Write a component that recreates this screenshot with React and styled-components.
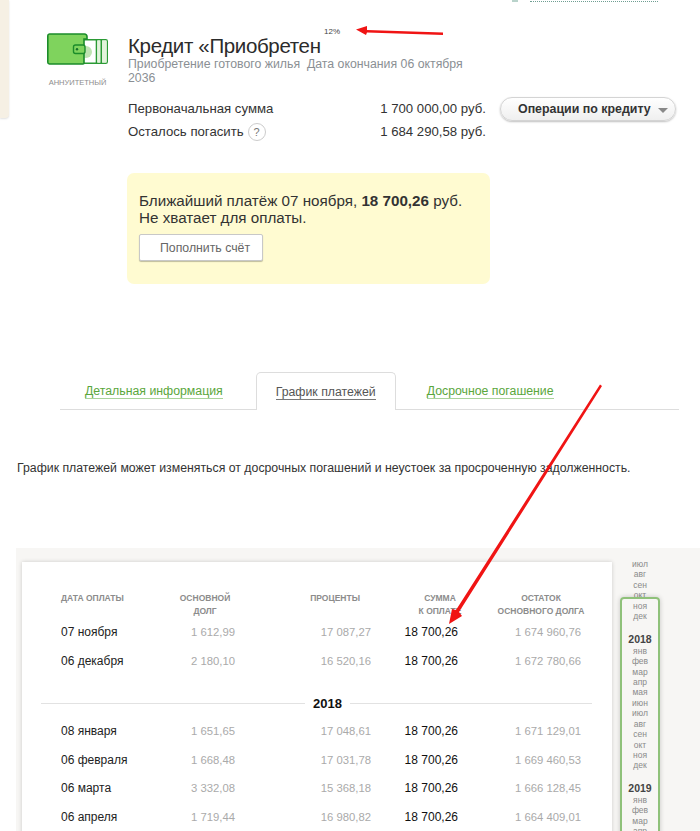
import React from "react";
import styled, { createGlobalStyle } from "styled-components";

const GlobalStyle = createGlobalStyle`
  html, body {
    margin: 0;
    padding: 0;
    background: #fff;
  }
  body {
    font-family: "Liberation Sans", Arial, sans-serif;
    color: #333;
  }
`;

const Page = styled.div`
  position: relative;
  width: 700px;
  height: 831px;
  overflow: hidden;
  background: #fff;
`;

// cropped leftovers of the page above the shot
const SideStub = styled.div`
  position: absolute;
  left: 0;
  top: 0;
  width: 9px;
  height: 118px;
  background: #f6f0e4;
  border-bottom-right-radius: 4px;
  box-shadow: 0 1px 2px rgba(0, 0, 0, 0.12);
`;
const TopLink = styled.div`
  position: absolute;
  left: 530px;
  top: 1px;
  width: 128px;
  border-top: 1px dotted #6f9e92;
`;
const TopIcon = styled.div`
  position: absolute;
  left: 512px;
  top: 0;
  width: 6px;
  height: 2px;
  background: #b9d3cb;
`;

const Arrows = styled.svg`
  position: absolute;
  left: 0;
  top: 0;
  z-index: 5;
  pointer-events: none;
`;

const Header = styled.section`
  display: flex;
  padding: 33px 0 0 47px;
  height: 140px;
  box-sizing: border-box;
`;
const ProductCol = styled.div`
  width: 61px;
  margin-right: 20px;
  display: flex;
  flex-direction: column;
  align-items: center;
`;
const ProductType = styled.div`
  margin-top: 13px;
  font-size: 7.5px;
  line-height: 10px;
  color: #8d8d8d;
  white-space: nowrap;
`;
const InfoCol = styled.div`
  position: relative;
  width: 548px;
`;
const Title = styled.h1`
  margin: 1px 0 -1px;
  font-size: 20.5px;
  font-weight: 400;
  line-height: 24px;
  letter-spacing: -0.35px;
  color: #2b2b2b;
  white-space: nowrap;
`;
const Percent = styled.span`
  position: absolute;
  left: 196px;
  top: -6px;
  font-size: 8px;
  line-height: 10px;
  color: #444;
`;
const Subtitle = styled.div`
  width: 345px;
  font-size: 12.3px;
  line-height: 14px;
  color: #8a8f94;
  white-space: pre-wrap;
`;
const SumBlock = styled.div`
  position: relative;
  margin-top: 12px;
`;
const SumRow = styled.div`
  display: flex;
  justify-content: space-between;
  width: 358px;
  height: 23px;
  font-size: 13.2px;
  line-height: 23px;
  color: #333;
`;
const SumLabel = styled.span`
  display: flex;
  align-items: center;
`;
const Hint = styled.span`
  width: 18px;
  height: 18px;
  margin-left: 4px;
  border: 1px solid #ccc;
  border-radius: 50%;
  box-sizing: border-box;
  font-size: 11px;
  line-height: 16px;
  text-align: center;
  color: #777;
`;
const OpsButton = styled.button`
  position: absolute;
  left: 372px;
  top: 0;
  display: flex;
  align-items: center;
  justify-content: space-between;
  width: 176px;
  height: 24px;
  padding: 0 7px 0 17px;
  border: 1px solid #d4d4d4;
  border-radius: 12px;
  background: linear-gradient(#fff, #efefef);
  box-shadow: 0 1px 2px rgba(0, 0, 0, 0.25);
  font-family: inherit;
  font-size: 12.4px;
  font-weight: 700;
  color: #333;
  white-space: nowrap;
`;
const Caret = styled.span`
  width: 0;
  height: 0;
  border-left: 5px solid transparent;
  border-right: 5px solid transparent;
  border-top: 5px solid #888;
  margin-top: 2px;
`;

const Notice = styled.section`
  width: 363px;
  height: 111px;
  margin: 33px 0 0 127px;
  padding: 19px 12px 0;
  box-sizing: border-box;
  border-radius: 7px;
  background: #fffbd1;
`;
const NoticeText = styled.div`
  font-size: 15.2px;
  line-height: 17px;
  color: #333;
  white-space: nowrap;
`;
const RefillButton = styled.button`
  display: block;
  width: 124px;
  height: 27px;
  margin-top: 8px;
  padding: 0 0 0 20px;
  border: 1px solid #c8c8c8;
  border-radius: 2px;
  background: #fff;
  box-shadow: 0 1px 1px rgba(0, 0, 0, 0.25);
  font-family: inherit;
  font-size: 12.3px;
  color: #666;
  text-align: left;
`;

const Tabs = styled.nav`
  display: flex;
  width: 619px;
  height: 38px;
  margin: 88px 0 0 60px;
  padding-left: 25px;
  box-sizing: border-box;
  border-bottom: 1px solid #ddd;
`;
const Tab = styled.div`
  box-sizing: border-box;
  height: 38px;
  margin-right: ${(p) => p.$gap || 0}px;
  font-size: 12.3px;
  line-height: 16px;
  ${(p) =>
    p.$active
      ? `
    padding: 11px 19px 0;
    background: #fff;
    border: 1px solid #ddd;
    border-bottom: 0;
    border-radius: 5px 5px 0 0;
    color: #555;
  `
      : `
    padding: 11px 0 0;
    color: #5aa63c;
  `}
`;
const TabLabel = styled.span`
  border-bottom: 1px solid ${(p) => (p.$active ? "#777" : "#a9d39a")};
`;

const Lead = styled.p`
  margin: 50px 0 0 17px;
  font-size: 12.3px;
  line-height: 16px;
  color: #333;
  white-space: nowrap;
`;

const Schedule = styled.section`
  display: flex;
  align-items: flex-start;
  height: 284px;
  margin: 72px 0 0 16px;
  padding: 14px 0 0 6px;
  box-sizing: border-box;
  background: #f7f6f4;
`;
const Card = styled.div`
  width: 590px;
  height: 300px;
  padding: 30px 0 0 39px;
  box-sizing: border-box;
  background: #fff;
  box-shadow: 0 0 4px rgba(0, 0, 0, 0.18);
`;
const columns = "100px 74px 136px 87px 123px";
const Grid = styled.div`
  display: grid;
  grid-template-columns: ${columns};
  grid-auto-rows: 28.5px;
  align-items: center;
`;
const HeadRow = styled.div`
  display: grid;
  grid-template-columns: ${columns};
  height: 26px;
  font-size: 8.5px;
  font-weight: 700;
  line-height: 13px;
  color: #8c8c8c;
`;
const HeadCell = styled.div`
  justify-self: ${(p) => (p.$first ? "start" : "end")};
  width: ${(p) => (p.$w ? `${p.$w}px` : "auto")};
  margin-right: ${(p) => p.$mr || 0}px;
  text-align: center;
  white-space: nowrap;
`;
const DateCell = styled.div`
  color: #222;
  font-size: 12px;
`;
const AmountCell = styled.div`
  text-align: right;
  font-size: ${(p) => (p.$strong ? 12 : 11.3)}px;
  color: ${(p) => (p.$strong ? "#111" : "#aaa")};
`;
const YearDivider = styled.div`
  display: flex;
  align-items: center;
  width: 551px;
  height: 28px;
  margin: 14px 0 0 -20px;
  font-size: 13px;
  font-weight: 700;
  color: #111;

  &::before,
  &::after {
    content: "";
    height: 1px;
    background: #e2e2e2;
  }
  &::before {
    flex: 0 0 264px;
  }
  &::after {
    flex: 1;
  }
  span {
    padding: 0 8px;
  }
`;

const Rail = styled.div`
  position: relative;
  width: 40px;
  margin: -3px 0 0 8px;
  text-align: center;
`;
const RailFrame = styled.div`
  position: absolute;
  left: 0;
  top: 38px;
  width: 40px;
  height: 260px;
  box-sizing: border-box;
  border: 2px solid #8fc17a;
  border-radius: 4px;
  box-shadow: 0 0 5px rgba(0, 0, 0, 0.2);
`;
const Month = styled.div`
  height: 10.45px;
  font-size: 8.5px;
  line-height: 10.45px;
  color: #8a8a8a;
`;
const Year = styled.div`
  margin: 11px 0 0;
  font-size: 10.5px;
  font-weight: 700;
  line-height: 13px;
  color: #444;
`;

const firstRows = [
  ["07 ноября", "1 612,99", "17 087,27", "1 674 960,76"],
  ["06 декабря", "2 180,10", "16 520,16", "1 672 780,66"],
];
const secondRows = [
  ["08 января", "1 651,65", "17 048,61", "1 671 129,01"],
  ["06 февраля", "1 668,48", "17 031,78", "1 669 460,53"],
  ["06 марта", "3 332,08", "15 368,18", "1 666 128,45"],
  ["06 апреля", "1 719,44", "16 980,82", "1 664 409,01"],
];
const months = ["янв", "фев", "мар", "апр", "мая", "июн", "июл", "авг", "сен", "окт", "ноя", "дек"];

function Rows({ rows }) {
  return (
    <Grid>
      {rows.map((r) => (
        <React.Fragment key={r[0]}>
          <DateCell>{r[0]}</DateCell>
          <AmountCell>{r[1]}</AmountCell>
          <AmountCell>{r[2]}</AmountCell>
          <AmountCell $strong>18 700,26</AmountCell>
          <AmountCell>{r[3]}</AmountCell>
        </React.Fragment>
      ))}
    </Grid>
  );
}

function WalletIcon() {
  return (
    <svg width="61" height="32" viewBox="0 0 61 32">
      <rect x="36" y="6.7" width="24.3" height="23.6" rx="1.5" fill="#fff" stroke="#2b9a35" strokeWidth="1.4" />
      <circle cx="39" cy="19" r="6" fill="#bfe3b2" />
      <rect x="48.7" y="7" width="1.6" height="23" fill="#2b9a35" />
      <rect x="50.3" y="7.4" width="3.2" height="22.2" fill="#e3f3dc" />
      <rect x="53.5" y="7" width="1.6" height="23" fill="#2b9a35" />
      <rect x="55.1" y="7.4" width="4.5" height="22.2" fill="#e3f3dc" />
      <path d="M2.5 1h35a2.5 2.5 0 0 1 2.5 2.5V6h-3v24a1 1 0 0 1-1 1H2.5A1.8 1.8 0 0 1 .8 29.2V2.8A1.8 1.8 0 0 1 2.5 1z" fill="#7fd35d" stroke="#1b8c2a" strokeWidth="1.6" />
      <rect x="26.5" y="12" width="11.5" height="8.5" rx="2" fill="#7fd35d" stroke="#1b8c2a" strokeWidth="1.4" />
      <circle cx="30" cy="16.2" r="1.2" fill="#14702a" />
    </svg>
  );
}

export default function App() {
  return (
    <Page>
      <GlobalStyle />
      <SideStub />
      <TopIcon />
      <TopLink />
      <Header>
        <ProductCol>
          <WalletIcon />
          <ProductType>АННУИТЕТНЫЙ</ProductType>
        </ProductCol>
        <InfoCol>
          <Title>Кредит «Приобретен</Title>
          <Percent>12%</Percent>
          <Subtitle>Приобретение готового жилья  Дата окончания 06 октября 2036</Subtitle>
          <SumBlock>
            <SumRow>
              <SumLabel>Первоначальная сумма</SumLabel>
              <span>1 700 000,00 руб.</span>
            </SumRow>
            <SumRow>
              <SumLabel>
                Осталось погасить<Hint>?</Hint>
              </SumLabel>
              <span>1 684 290,58 руб.</span>
            </SumRow>
            <OpsButton>
              Операции по кредиту
              <Caret />
            </OpsButton>
          </SumBlock>
        </InfoCol>
      </Header>

      <Notice>
        <NoticeText>
          Ближайший платёж 07 ноября, <b>18 700,26</b> руб.
          <br />
          Не хватает для оплаты.
        </NoticeText>
        <RefillButton>Пополнить счёт</RefillButton>
      </Notice>

      <Tabs>
        <Tab $gap={33}>
          <TabLabel>Детальная информация</TabLabel>
        </Tab>
        <Tab $active $gap={31}>
          <TabLabel $active>График платежей</TabLabel>
        </Tab>
        <Tab>
          <TabLabel>Досрочное погашение</TabLabel>
        </Tab>
      </Tabs>

      <Lead>График платежей может изменяться от досрочных погашений и неустоек за просроченную задолженность.</Lead>

      <Schedule>
        <Card>
          <HeadRow>
            <HeadCell $first>ДАТА ОПЛАТЫ</HeadCell>
            <HeadCell $w={60}>
              ОСНОВНОЙ
              <br />
              ДОЛГ
            </HeadCell>
            <HeadCell $mr={11}>ПРОЦЕНТЫ</HeadCell>
            <HeadCell $w={60} $mr={-12}>
              СУММА
              <br />К ОПЛАТЕ
            </HeadCell>
            <HeadCell $w={90} $mr={-5}>
              ОСТАТОК
              <br />
              ОСНОВНОГО ДОЛГА
            </HeadCell>
          </HeadRow>
          <Rows rows={firstRows} />
          <YearDivider>
            <span>2018</span>
          </YearDivider>
          <Rows rows={secondRows} />
        </Card>
        <Rail>
          <RailFrame />
          {months.slice(6).map((m) => (
            <Month key={`a-${m}`}>{m}</Month>
          ))}
          <Year>2018</Year>
          {months.map((m) => (
            <Month key={`b-${m}`}>{m}</Month>
          ))}
          <Year>2019</Year>
          {months.slice(0, 4).map((m) => (
            <Month key={`c-${m}`}>{m}</Month>
          ))}
        </Rail>
      </Schedule>

      <Arrows width="700" height="831" viewBox="0 0 700 831">
        <polygon points="443,32.5 443,35 367,32.5 366,35 356,29.5 367,26 367,30" fill="#f01414" />
        <polygon points="600,384.5 602,386 459,612 462,616 449,624 452,609 456,610" fill="#f01414" />
      </Arrows>
    </Page>
  );
}
